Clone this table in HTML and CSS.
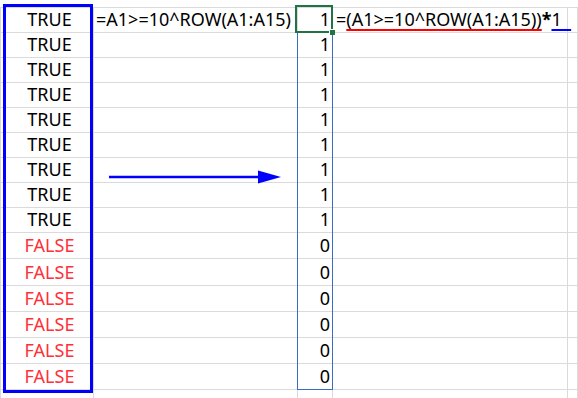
FILE: index.html
```
<!DOCTYPE html>
<html>

<head>
  <meta charset="utf-8">
  <title>ROW power check</title>
  <link rel="stylesheet" href="styles.css">
</head>

<body>

  <div class="sheet-wrap">

    <!-- Worksheet grid: A = test result, B = formula text, C = numeric result, D = formula text -->
    <div class="sheet">
      <div class="cell col-a">TRUE</div>
      <div class="cell col-b">=A1&gt;=10^ROW(A1:A15)</div>
      <div class="cell col-c">1</div>
      <div class="cell col-d">=<u class="mark-red">(A1&gt;=10^ROW(A1:A15))</u><b>*</b><u class="mark-blue">1  </u></div>
      <div class="cell"></div>

      <div class="cell col-a">TRUE</div><div class="cell"></div><div class="cell col-c">1</div><div class="cell"></div><div class="cell"></div>
      <div class="cell col-a">TRUE</div><div class="cell"></div><div class="cell col-c">1</div><div class="cell"></div><div class="cell"></div>
      <div class="cell col-a">TRUE</div><div class="cell"></div><div class="cell col-c">1</div><div class="cell"></div><div class="cell"></div>
      <div class="cell col-a">TRUE</div><div class="cell"></div><div class="cell col-c">1</div><div class="cell"></div><div class="cell"></div>
      <div class="cell col-a">TRUE</div><div class="cell"></div><div class="cell col-c">1</div><div class="cell"></div><div class="cell"></div>
      <div class="cell col-a">TRUE</div><div class="cell"></div><div class="cell col-c">1</div><div class="cell"></div><div class="cell"></div>
      <div class="cell col-a">TRUE</div><div class="cell"></div><div class="cell col-c">1</div><div class="cell"></div><div class="cell"></div>
      <div class="cell col-a">TRUE</div><div class="cell"></div><div class="cell col-c">1</div><div class="cell"></div><div class="cell"></div>

      <div class="cell col-a false">FALSE</div><div class="cell"></div><div class="cell col-c">0</div><div class="cell"></div><div class="cell"></div>
      <div class="cell col-a false">FALSE</div><div class="cell"></div><div class="cell col-c">0</div><div class="cell"></div><div class="cell"></div>
      <div class="cell col-a false">FALSE</div><div class="cell"></div><div class="cell col-c">0</div><div class="cell"></div><div class="cell"></div>
      <div class="cell col-a false">FALSE</div><div class="cell"></div><div class="cell col-c">0</div><div class="cell"></div><div class="cell"></div>
      <div class="cell col-a false">FALSE</div><div class="cell"></div><div class="cell col-c">0</div><div class="cell"></div><div class="cell"></div>
      <div class="cell col-a false">FALSE</div><div class="cell"></div><div class="cell col-c">0</div><div class="cell"></div><div class="cell"></div>

      <div class="cell"></div><div class="cell"></div><div class="cell"></div><div class="cell"></div><div class="cell"></div>
    </div>

    <!-- Annotations drawn over the sheet -->
    <div class="box-a"></div>
    <div class="range-c"></div>
    <div class="active-cell"><span class="fill-handle"></span></div>

    <svg class="arrow" width="180" height="24" viewBox="0 0 180 24">
      <line x1="4" y1="12" x2="155" y2="12" stroke="#0000ff" stroke-width="2.5" />
      <polygon points="153,5.5 176,12 153,18.5" fill="#0000ff" />
    </svg>

  </div>

</body>

</html>
```

FILE: styles.css
```
body {
  margin: 0;
  padding: 0;
  background-color: #ffffff;
  font-family: 'Noto Sans', 'Liberation Sans', sans-serif;
  overflow: hidden;
}

.sheet-wrap {
  position: relative;
  height: 398px;
  padding-top: 7px;
  box-sizing: border-box;
}

.sheet {
  display: grid;
  grid-template-columns: 93px 204px 35px 235px 1fr;
  grid-template-rows: repeat(9, 25px) 26px 27px 26px 26px 26px 26px 25px;
  border-top: 1px solid #dadada;
  border-left: 1px solid #dadada;
}

.cell {
  display: flex;
  align-items: flex-end;
  box-sizing: border-box;
  border-right: 1px solid #dadada;
  border-bottom: 1px solid #dadada;
  padding: 0 2px 4px 2px;
  font-size: 18px;
  line-height: 18px;
  color: #000;
  white-space: pre;
  min-width: 0;
}

.col-a {
  justify-content: center;
  padding-left: 7px;
}

.col-a.false {
  color: #ff3038;
}

.col-c {
  justify-content: flex-end;
  padding-right: 2px;
}

.col-d {
  padding-left: 3px;
}

.col-d u {
  text-decoration-thickness: 2px;
  text-underline-offset: 3px;
}

.mark-red {
  text-decoration-color: #ff0000;
}

.mark-blue {
  text-decoration-color: #0000ff;
}

.col-d b {
  font-weight: 700;
}

/* Thick blue frame round column A */
.box-a {
  position: absolute;
  left: 3px;
  top: 4px;
  width: 90px;
  height: 389px;
  border: 3px solid #0000ff;
  box-sizing: border-box;
}

/* Referenced range C2:C15 */
.range-c {
  position: absolute;
  left: 297px;
  top: 32px;
  width: 36px;
  height: 358px;
  border: 1px solid #3a6cc6;
  box-sizing: border-box;
}

/* Selected cell C1 */
.active-cell {
  position: absolute;
  left: 295px;
  top: 5px;
  width: 38px;
  height: 28px;
  border: 2px solid #217346;
  box-sizing: border-box;
}

.fill-handle {
  position: absolute;
  right: -4px;
  bottom: -4px;
  width: 5px;
  height: 5px;
  background-color: #217346;
  border: 1px solid #ffffff;
  border-width: 1px 0 0 1px;
}

.arrow {
  position: absolute;
  left: 105px;
  top: 165px;
}
```
